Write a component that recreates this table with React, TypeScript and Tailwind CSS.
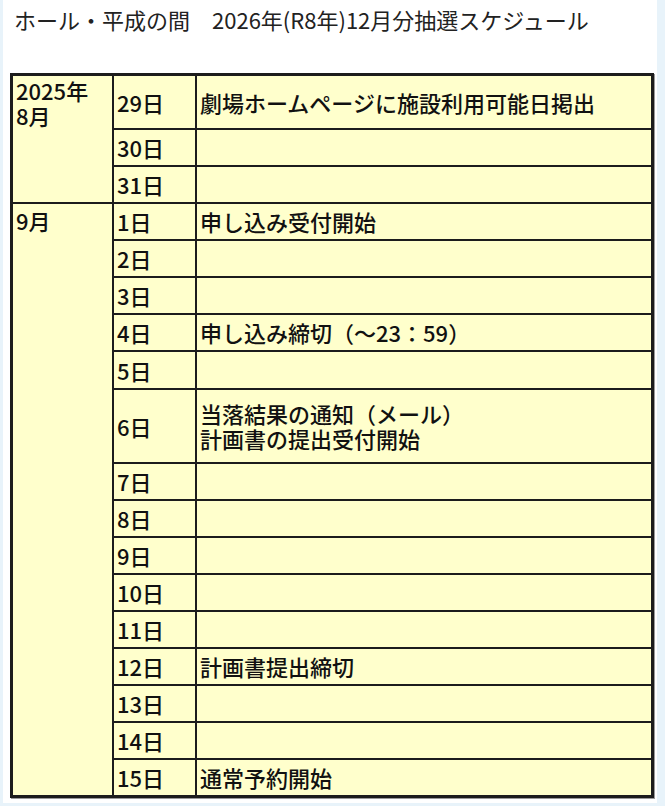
const FONT = "font-['Liberation_Sans_Narrow','Noto_Sans_CJK_JP',sans-serif]";

type Row = { day: string; text?: string[] };

const aug: Row[] = [
  { day: "29日", text: ["劇場ホームページに施設利用可能日掲出"] },
  { day: "30日" },
  { day: "31日" },
];

const sep: Row[] = [
  { day: "1日", text: ["申し込み受付開始"] },
  { day: "2日" },
  { day: "3日" },
  { day: "4日", text: ["申し込み締切（〜23：59）"] },
  { day: "5日" },
  { day: "6日", text: ["当落結果の通知（メール）", "計画書の提出受付開始"] },
  { day: "7日" },
  { day: "8日" },
  { day: "9日" },
  { day: "10日" },
  { day: "11日" },
  { day: "12日", text: ["計画書提出締切"] },
  { day: "13日" },
  { day: "14日" },
  { day: "15日", text: ["通常予約開始"] },
];

function Cell({ children }: { children?: React.ReactNode }) {
  return (
    <div className="flex flex-col justify-center bg-[#ffffcc] pl-[3px] text-[22px] leading-[25px]">
      {children}
    </div>
  );
}

export default function App() {
  return (
    <div className={`min-h-screen bg-[#e8f3fa] pb-[3px] pl-[3px] pr-[8px] ${FONT}`}>
      <div className="h-[803px] bg-white pl-[7px] pr-[3px]">
        <h1 className="pl-[4px] pt-[4px] text-[22px] font-normal leading-[30px] text-[#222]">
          ホール・平成の間　2026年(R8年)12月分抽選スケジュール
        </h1>
        <div className="mt-[39px] grid grid-cols-[99px_81px_1fr] grid-rows-[52px_35px_35px_35px_35px_35px_35px_36px_72px_35px_35px_35px_35px_35px_35px_35px_35px_35px] gap-[2px] border-[3px] border-[#1c1c1c] bg-[#1c1c1c] font-medium text-[#111] shadow-[1px_1px_0_#999]">
          <div className="row-span-3 bg-[#ffffcc] pl-[3px] pt-[2px] text-[22px] leading-[25px]">
            2025年
            <br />
            8月
          </div>
          {aug.map((r) => (
            <Row key={r.day} r={r} />
          ))}
          <div className="row-span-15 bg-[#ffffcc] pl-[3px] pt-[4px] text-[22px] leading-[25px]">
            9月
          </div>
          {sep.map((r) => (
            <Row key={r.day} r={r} />
          ))}
        </div>
      </div>
    </div>
  );
}

function Row({ r }: { r: Row }) {
  return (
    <>
      <Cell>{r.day}</Cell>
      <Cell>
        {r.text?.map((t) => (
          <div key={t}>{t}</div>
        ))}
      </Cell>
    </>
  );
}
